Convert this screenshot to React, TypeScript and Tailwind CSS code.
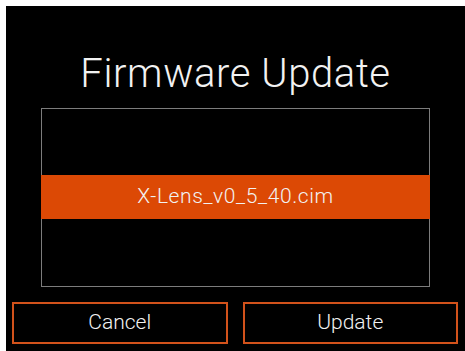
export default function App() {
  const font = { fontFamily: 'Roboto, "Liberation Sans", sans-serif' };

  return (
    <div className="w-[465px] h-[351px] bg-white pl-[6px] pt-[6px]" style={font}>
      <div className="flex h-full w-full flex-col bg-black text-[#f2f2f2] font-light">
        <div className="mt-[48px] h-[40px] text-center text-[40px] leading-[40px] tracking-[0.6px]">
          Firmware Update
        </div>

        <div className="mx-[35px] mt-[14px] h-[179px] border border-[#7c7c7c] pt-[66px]">
          <div className="-mx-px flex h-[44px] items-center justify-center bg-[#dc4905] text-[21px] tracking-[0.6px]">
            X-Lens_v0_5_40.cim
          </div>
        </div>

        <div className="mt-[15px] flex gap-[15px] pl-[6px] pr-[7px]">
          <button className="flex h-[42px] flex-1 items-center justify-center border-2 border-[#d2521b] text-[21px] font-light">
            Cancel
          </button>
          <button className="flex h-[42px] flex-1 items-center justify-center border-2 border-[#d2521b] text-[21px] font-light">
            Update
          </button>
        </div>
      </div>
    </div>
  );
}
